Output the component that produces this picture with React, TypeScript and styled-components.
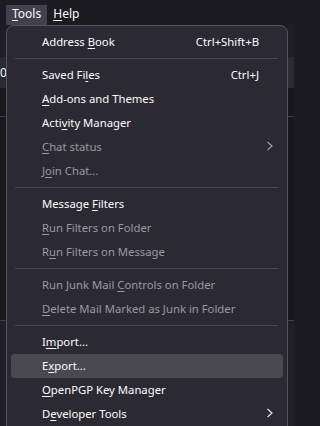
import styled, { createGlobalStyle } from "styled-components";

const GlobalStyle = createGlobalStyle`
  html, body {
    margin: 0;
    padding: 0;
    background: #1c1b22;
  }
  body {
    font-family: "Noto Sans", "Open Sans", sans-serif;
    font-size: 11.3px;
    color: #fbfbfe;
  }
`;

const Window = styled.div`
  position: relative;
  width: 294px;
  height: 426px;
  overflow: hidden;
  display: flex;
  flex-direction: column;
  background: #1c1b22;
`;

const MenuBar = styled.div`
  height: 25px;
  display: flex;
  align-items: flex-end;
  padding-left: 6px;
  box-sizing: border-box;
`;

const MenuBarItem = styled.div<{ $open?: boolean }>`
  height: 20px;
  line-height: 18px;
  padding: 0 6px;
  font-size: 12px;
  background: ${(p) => (p.$open ? "#42414d" : "transparent")};
  color: #fbfbfe;
`;

const Band = styled.div<{ $h: number; $bg: string; $line?: boolean }>`
  height: ${(p) => p.$h}px;
  flex: ${(p) => (p.$h === 0 ? "1" : "none")};
  background: ${(p) => p.$bg};
  border-top: ${(p) => (p.$line ? "1px solid #3d3c44" : "none")};
  box-sizing: border-box;
  display: flex;
  align-items: center;
  font-size: 12px;
`;

const BandText = styled.span`
  margin-left: 0;
`;

const Popup = styled.div`
  position: absolute;
  left: 6px;
  top: 25px;
  width: 282px;
  height: 420px;
  box-sizing: border-box;
  background: #2b2a33;
  border: 1px solid #55545e;
  border-radius: 8px;
  padding: 4px 0;
`;

const Item = styled.div<{ $hover?: boolean; $disabled?: boolean }>`
  height: 24px;
  margin: 0 4px;
  padding: 0 24px 2px 31px;
  box-sizing: border-box;
  display: flex;
  align-items: center;
  border-radius: 4px;
  background: ${(p) => (p.$hover ? "#4a4950" : "transparent")};
  color: ${(p) => (p.$disabled ? "#9a99a2" : "#fbfbfe")};
  white-space: nowrap;
`;

const Label = styled.span`
  flex: 1;
`;

const Key = styled.span`
  text-decoration: underline;
  text-underline-offset: 2px;
`;

const Shortcut = styled.span`
  color: #fbfbfe;
`;

const Arrow = styled.svg`
  margin-right: -15px;
`;

const Separator = styled.div`
  height: 1px;
  margin: 4px 9px 4px 8px;
  background: #48474f;
`;

type Entry = {
  pre: string;
  key: string;
  post: string;
  shortcut?: string;
  disabled?: boolean;
  submenu?: boolean;
  hover?: boolean;
};

const groups: Entry[][] = [
  [{ pre: "Address ", key: "B", post: "ook", shortcut: "Ctrl+Shift+B" }],
  [
    { pre: "Saved Fi", key: "l", post: "es", shortcut: "Ctrl+J" },
    { pre: "", key: "A", post: "dd-ons and Themes" },
    { pre: "Acti", key: "v", post: "ity Manager" },
    { pre: "", key: "C", post: "hat status", disabled: true, submenu: true },
    { pre: "J", key: "o", post: "in Chat...", disabled: true },
  ],
  [
    { pre: "Message ", key: "F", post: "ilters" },
    { pre: "", key: "R", post: "un Filters on Folder", disabled: true },
    { pre: "R", key: "u", post: "n Filters on Message", disabled: true },
  ],
  [
    { pre: "Run Junk Mail ", key: "C", post: "ontrols on Folder", disabled: true },
    { pre: "", key: "D", post: "elete Mail Marked as Junk in Folder", disabled: true },
  ],
  [
    { pre: "I", key: "m", post: "port..." },
    { pre: "E", key: "x", post: "port...", hover: true },
    { pre: "", key: "O", post: "penPGP Key Manager" },
    { pre: "D", key: "e", post: "veloper Tools", submenu: true },
  ],
];

const Chevron = ({ color }: { color: string }) => (
  <Arrow width="8" height="10" viewBox="0 0 8 10">
    <polyline points="1.5,1 6,5 1.5,9" fill="none" stroke={color} strokeWidth="1.2" />
  </Arrow>
);

export default function App() {
  return (
    <Window>
      <GlobalStyle />
      <MenuBar>
        <MenuBarItem $open>
          <Key>T</Key>ools
        </MenuBarItem>
        <MenuBarItem>
          <Key>H</Key>elp
        </MenuBarItem>
      </MenuBar>
      <Band $h={32} $bg="#1f1e25" />
      <Band $h={31} $bg="#2b2a33">
        <BandText>0</BandText>
      </Band>
      <Band $h={28} $bg="#18171c" />
      <Band $h={204} $bg="#18171c" $line />
      <Band $h={0} $bg="#201f28" $line />

      <Popup>
        {groups.map((group, gi) => (
          <div key={gi}>
            {gi > 0 && <Separator />}
            {group.map((it, i) => (
              <Item key={i} $hover={it.hover} $disabled={it.disabled}>
                <Label>
                  {it.pre}
                  <Key>{it.key}</Key>
                  {it.post}
                </Label>
                {it.shortcut && <Shortcut>{it.shortcut}</Shortcut>}
                {it.submenu && <Chevron color={it.disabled ? "#9a99a2" : "#e0e0e6"} />}
              </Item>
            ))}
          </div>
        ))}
      </Popup>
    </Window>
  );
}
